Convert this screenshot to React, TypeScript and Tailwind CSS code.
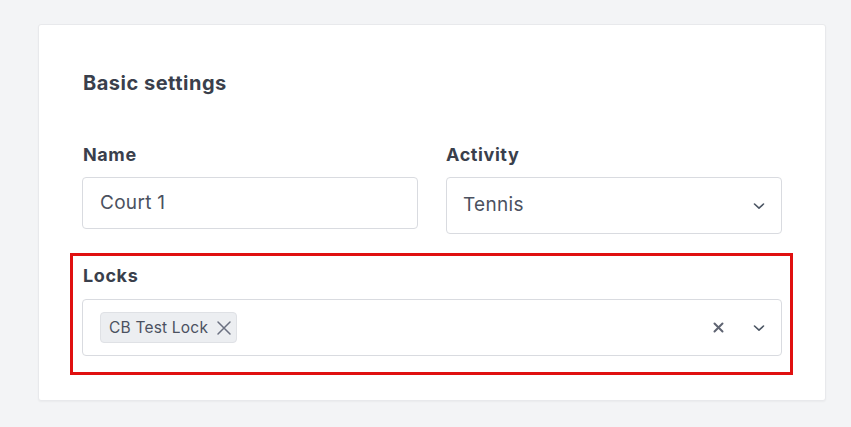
import React from "react";

function Chevron() {
  return (
    <svg width="14" height="14" viewBox="0 0 14 14" fill="none">
      <path d="M2.5 5 L7 9.2 L11.5 5" stroke="#4b5563" strokeWidth="1.6" strokeLinecap="round" strokeLinejoin="round" />
    </svg>
  );
}

export default function App() {
  return (
    <div
      className="min-h-[427px] w-[851px] bg-[#f3f4f6] pt-[24px] pl-[38px]"
      style={{ fontFamily: "Inter, 'Noto Sans', sans-serif" }}
    >
      <div className="w-[788px] h-[377px] bg-white border border-[#e8e9ec] rounded-[3px] shadow-[0_1px_2px_rgba(0,0,0,0.04)] px-[43px] pt-[44px]">
        <h2 className="text-[20px] leading-[28px] font-bold text-[#3a3f4c] tracking-[0.5px] ml-[1px]">Basic settings</h2>
        <div className="mt-[46px] grid grid-cols-2 gap-x-[28px] items-start">
          <div>
            <div className="text-[18px] leading-[24px] font-bold text-[#3a3f4c] tracking-[0.6px] ml-[1px]">Name</div>
            <div className="mt-[10px] h-[52px] border border-[#d9dbe0] rounded-[4px] flex items-center pl-[17px] text-[19px] tracking-[0.3px] text-[#4b5160]">
              Court 1
            </div>
          </div>
          <div>
            <div className="text-[18px] leading-[24px] font-bold text-[#3a3f4c] tracking-[0.6px]">Activity</div>
            <div className="mt-[10px] h-[57px] border border-[#d9dbe0] rounded-[4px] flex items-center justify-between pl-[16px] pr-[15px] text-[19px] tracking-[0.3px] text-[#4b5160]">
              <span>Tennis</span>
              <Chevron />
            </div>
          </div>
        </div>
        <div className="mt-[19px] -mx-[12px] w-[723px] border-[3px] border-[#e01010] pl-[9px] pr-[8px] pt-[8px] pb-[16px]">
          <div className="text-[18px] leading-[24px] font-bold text-[#3a3f4c] tracking-[0.6px] ml-[1px]">Locks</div>
          <div className="mt-[11px] h-[57px] border border-[#d9dbe0] rounded-[4px] flex items-center pl-[17px] pr-[15px]">
            <div className="h-[31px] flex items-center gap-[8px] bg-[#eceef1] border border-[#dfe1e5] rounded-[4px] pl-[8px] pr-[4px] text-[15.5px] tracking-[0.2px] text-[#4b5160]">
              <span>CB Test Lock</span>
              <svg width="16" height="16" viewBox="0 0 16 16" fill="none">
                <path d="M2 2 L14 14 M14 2 L2 14" stroke="#6b7080" strokeWidth="1.5" strokeLinecap="round" />
              </svg>
            </div>
            <div className="ml-auto flex items-center gap-[28px]">
              <svg width="11" height="11" viewBox="0 0 11 11" fill="none">
                <path d="M1.5 1.5 L9.5 9.5 M9.5 1.5 L1.5 9.5" stroke="#5f6472" strokeWidth="2" strokeLinecap="round" />
              </svg>
              <Chevron />
            </div>
          </div>
        </div>
      </div>
    </div>
  );
}
